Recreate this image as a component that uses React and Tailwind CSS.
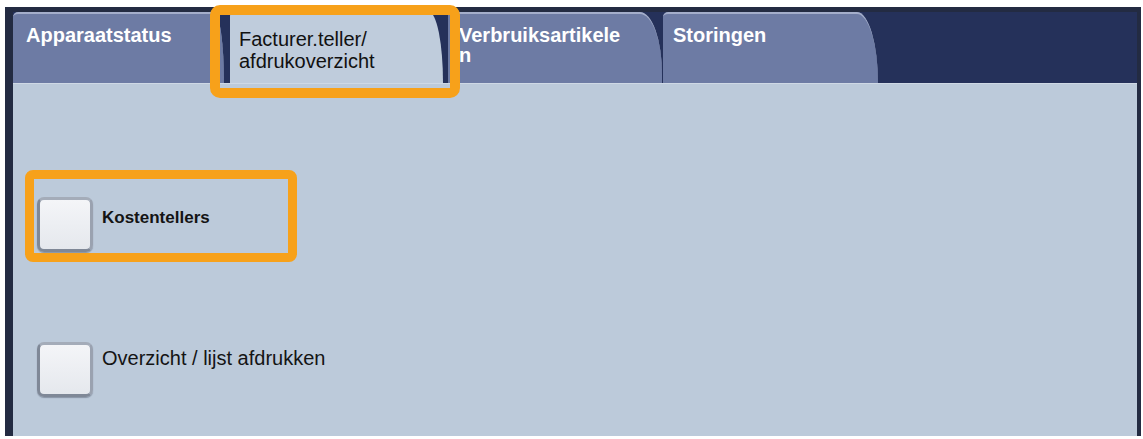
import React from 'react';

const tabs = [
  { id: 'status', label: 'Apparaatstatus' },
  { id: 'billing', label: 'Facturer.teller/ afdrukoverzicht' },
  { id: 'supplies', label: 'Verbruiksartikelen' },
  { id: 'faults', label: 'Storingen' },
];

const options = [
  { id: 'counters', label: 'Kostentellers' },
  { id: 'report', label: 'Overzicht / lijst afdrukken' },
];

const Checkbox = () => (
  <div className="w-[56px] h-[55px] shrink-0 rounded-[7px] border-[3px] border-[#7f8897] border-t-[#a4acb9] border-r-[#9aa2b0] bg-gradient-to-b from-[#f4f5f8] to-[#e5e8ed] shadow-[0_1px_1px_rgba(40,50,70,0.35)]" />
);

const App = () => {
  return (
    <div className="relative w-[1143px] h-[439px] bg-white font-['Liberation_Sans',Arial,sans-serif] overflow-hidden">
      <div className="absolute left-[5px] top-[7px] w-[1136px] h-[429px] bg-[#232b42] pl-[8px] pr-[4px] pt-[5px] flex flex-col">
        {/* Tab bar */}
        <div className="flex h-[71px] bg-[#25315a] shrink-0">
          <div className="w-[211px] h-full bg-[#6d7ba4] rounded-tl-[5px] rounded-tr-[10px_71px] border-t-2 border-[#a4aecb] pl-[13px] pt-[11px]">
            <span className="block text-[20px] leading-[20px] font-bold text-white">{tabs[0].label}</span>
          </div>
          <div className="ml-[6px] w-[213px] h-full bg-[#bfccdc] rounded-tl-[4px] rounded-tr-[14px_71px] pl-[9px] pt-[16px]">
            <span className="block text-[20px] leading-[22px] text-[#111]">
              Facturer.teller/
              <br />
              afdrukoverzicht
            </span>
          </div>
          <div className="ml-[5px] w-[214px] h-full bg-[#6d7ba4] rounded-tr-[22px_62px] border-t-2 border-[#a4aecb] pl-[11px] pt-[11px]">
            <span className="block text-[20px] leading-[20px] font-bold text-white">
              Verbruiksartikele
              <br />n
            </span>
          </div>
          <div className="ml-[1px] w-[215px] h-full bg-[#6d7ba4] rounded-tl-[5px] rounded-tr-[21px_71px] border-t-2 border-[#a4aecb] pl-[10px] pt-[11px]">
            <span className="block text-[20px] leading-[20px] font-bold text-white">{tabs[3].label}</span>
          </div>
        </div>

        {/* Content */}
        <div className="flex-1 bg-[#bccada] border-t border-[#cfd9e5] pl-[24px] pt-[113px] flex flex-col gap-[90px]">
          <div className="flex items-start gap-[9px]">
            <Checkbox />
            <span className="mt-[10px] text-[17px] leading-[21px] font-bold text-[#141414]">{options[0].label}</span>
          </div>
          <div className="flex items-start gap-[9px]">
            <Checkbox />
            <span className="mt-[4px] text-[20px] leading-[24px] text-[#141414]">{options[1].label}</span>
          </div>
        </div>
      </div>

      {/* Highlight boxes */}
      <div className="absolute left-[210px] top-[5px] w-[250px] h-[93px] rounded-[10px] border-[10px] border-[#f7a11a]" />
      <div className="absolute left-[25px] top-[170px] w-[272px] h-[92px] rounded-[8px] border-[9px] border-[#f7a11a]" />
    </div>
  );
};

export default App;
